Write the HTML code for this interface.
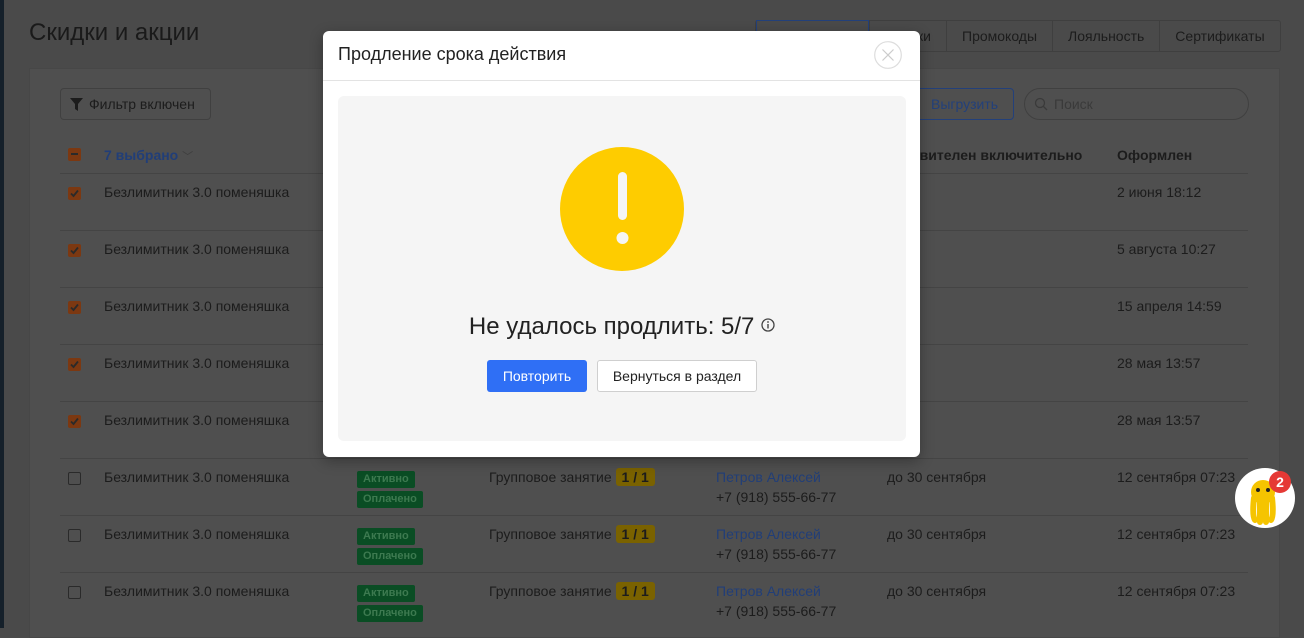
<!DOCTYPE html>
<html><head><meta charset="utf-8"><style>
*{box-sizing:border-box;margin:0;padding:0}
body{width:1304px;height:628px;overflow:hidden;background:#4a4a4a;font-family:"Liberation Sans",Arial,sans-serif;color:#1c1c1c;position:relative;font-size:14px}
.abs{position:absolute}
.strip{left:0;top:0;width:4px;height:628px;background:#15202a}
h1{position:absolute;left:29px;top:19px;font-size:24px;font-weight:normal;color:#1a1a1a}
.tabs{position:absolute;left:755px;top:20px;height:32px;display:flex;border:1px solid #3f3f3f;border-radius:3px}
.tabs div{padding:0 15px;line-height:30px;border-left:1px solid #3f3f3f;font-size:14px;color:#1c1c1c}
.card{left:29px;top:68px;width:1251px;height:570px;background:#4f4f4f;border:1px solid #474747}
.btn{position:absolute;border:1px solid #404040;border-radius:4px;height:32px;line-height:30px;font-size:14px}
.row{position:absolute;left:60px;width:1188px;height:57px;border-top:1px solid #444}
.cb{position:absolute;left:8px;top:13px;width:13px;height:13px;border-radius:2px;background:#7c3811}
.cbe{background:none;border:1px solid #2a2a2a}
.cell{position:absolute;top:10px;font-size:14px}
.tag{display:block;background:#0a4d24;color:#3d7a50;font-size:11px;font-weight:bold;padding:0 6px;border-radius:2px;height:17px;line-height:17px;margin-bottom:3px;width:max-content}
.y{background:#7a6200;color:#1c1c1c;font-weight:bold;padding:1px 6px;border-radius:3px}
.modal{left:323px;top:31px;width:597px;height:426px;background:#fff;border-radius:6px;box-shadow:0 4px 14px rgba(0,0,0,.3)}
</style></head><body>
<div class="abs strip"></div>
<h1>Скидки и акции</h1>
<div class="tabs"><div style="width:113px;border:1px solid #23407a;margin:-1px 0"></div><div style="width:77px;text-align:right">ки</div><div>Промокоды</div><div>Лояльность</div><div>Сертификаты</div></div>
<div class="abs card"></div>
<div class="btn" style="left:60px;top:88px;width:151px;padding-left:28px;color:#1c1c1c"><svg class="abs" style="left:9px;top:9px" width="13" height="13" viewBox="0 0 13 13"><path d="M0 0H13L8 6V13L5 11V6Z" fill="#1c1c1c"/></svg>Фильтр включен</div>
<div class="btn" style="left:905px;top:88px;width:109px;border-color:#23407a;color:#23407a;padding-left:25px">Выгрузить</div>
<div class="btn" style="left:1024px;top:88px;width:225px;border-radius:16px;color:#3a3a3a;padding-left:29px"><svg class="abs" style="left:9px;top:8px" width="14" height="14" viewBox="0 0 14 14"><circle cx="6" cy="6" r="4.5" stroke="#3a3a3a" fill="none" stroke-width="1.3"/><path d="M9.5 9.5L13 13" stroke="#3a3a3a" stroke-width="1.3"/></svg>Поиск</div>
<div class="abs" style="left:68px;top:148px;width:13px;height:13px;background:#7c3811;border-radius:2px"><div style="position:absolute;left:3px;top:5px;width:7px;height:2px;background:#2a2a2a"></div></div>
<div class="abs" style="left:104px;top:147px;font-weight:bold;color:#213e78;font-size:14px">7 выбрано <span style="color:#3e3e3e;font-weight:normal;font-size:11px">﹀</span></div>
<div class="abs" style="left:905px;top:147px;font-weight:bold">ствителен включительно</div>
<div class="abs" style="left:1117px;top:147px;font-weight:bold">Оформлен</div>

<div class="row" style="top:173px"><div class="cb"><svg width="13" height="13"><path d="M3 6.5L5.5 9L10 3.5" stroke="#2a2a2a" stroke-width="1.8" fill="none"/></svg></div><div class="cell" style="left:44px">Безлимитник 3.0 поменяшка</div><div class="cell" style="left:1057px">2 июня 18:12</div></div>
<div class="row" style="top:230px"><div class="cb"><svg width="13" height="13"><path d="M3 6.5L5.5 9L10 3.5" stroke="#2a2a2a" stroke-width="1.8" fill="none"/></svg></div><div class="cell" style="left:44px">Безлимитник 3.0 поменяшка</div><div class="cell" style="left:1057px">5 августа 10:27</div></div>
<div class="row" style="top:287px"><div class="cb"><svg width="13" height="13"><path d="M3 6.5L5.5 9L10 3.5" stroke="#2a2a2a" stroke-width="1.8" fill="none"/></svg></div><div class="cell" style="left:44px">Безлимитник 3.0 поменяшка</div><div class="cell" style="left:1057px">15 апреля 14:59</div></div>
<div class="row" style="top:344px"><div class="cb"><svg width="13" height="13"><path d="M3 6.5L5.5 9L10 3.5" stroke="#2a2a2a" stroke-width="1.8" fill="none"/></svg></div><div class="cell" style="left:44px">Безлимитник 3.0 поменяшка</div><div class="cell" style="left:1057px">28 мая 13:57</div></div>
<div class="row" style="top:401px"><div class="cb"><svg width="13" height="13"><path d="M3 6.5L5.5 9L10 3.5" stroke="#2a2a2a" stroke-width="1.8" fill="none"/></svg></div><div class="cell" style="left:44px">Безлимитник 3.0 поменяшка</div><div class="cell" style="left:1057px">28 мая 13:57</div></div>
<div class="row" style="top:458px"><div class="cb cbe"></div><div class="cell" style="left:44px">Безлимитник 3.0 поменяшка</div><div class="cell" style="left:297px;top:12px"><span class="tag">Активно</span><span class="tag">Оплачено</span></div><div class="cell" style="left:429px">Групповое занятие <span class="y">1 / 1</span></div><div class="cell" style="left:656px;line-height:20px;top:8px"><span style="color:#213e78">Петров Алексей</span><br>+7 (918) 555-66-77</div><div class="cell" style="left:827px">до 30 сентября</div><div class="cell" style="left:1057px">12 сентября 07:23</div></div>
<div class="row" style="top:515px"><div class="cb cbe"></div><div class="cell" style="left:44px">Безлимитник 3.0 поменяшка</div><div class="cell" style="left:297px;top:12px"><span class="tag">Активно</span><span class="tag">Оплачено</span></div><div class="cell" style="left:429px">Групповое занятие <span class="y">1 / 1</span></div><div class="cell" style="left:656px;line-height:20px;top:8px"><span style="color:#213e78">Петров Алексей</span><br>+7 (918) 555-66-77</div><div class="cell" style="left:827px">до 30 сентября</div><div class="cell" style="left:1057px">12 сентября 07:23</div></div>
<div class="row" style="top:572px"><div class="cb cbe"></div><div class="cell" style="left:44px">Безлимитник 3.0 поменяшка</div><div class="cell" style="left:297px;top:12px"><span class="tag">Активно</span><span class="tag">Оплачено</span></div><div class="cell" style="left:429px">Групповое занятие <span class="y">1 / 1</span></div><div class="cell" style="left:656px;line-height:20px;top:8px"><span style="color:#213e78">Петров Алексей</span><br>+7 (918) 555-66-77</div><div class="cell" style="left:827px">до 30 сентября</div><div class="cell" style="left:1057px">12 сентября 07:23</div></div>

<div class="abs" style="left:1235px;top:468px;width:60px;height:60px;border-radius:50%;background:#fff"><svg width="60" height="60" viewBox="0 0 60 60"><circle cx="28" cy="24" r="12" fill="#f5c400"/><path d="M19 30Q17 48 20 52M25 34V54M31 34V54M37 30Q39 48 36 52" stroke="#f5c400" stroke-width="6" stroke-linecap="round" fill="none"/><circle cx="23" cy="22" r="2" fill="#222"/><circle cx="33" cy="22" r="2" fill="#222"/></svg><div style="position:absolute;left:34px;top:3px;width:22px;height:22px;border-radius:50%;background:#e53935;color:#fff;font-weight:bold;font-size:14px;text-align:center;line-height:22px">2</div></div>

<div class="abs modal">
<div class="abs" style="left:15px;top:13px;font-size:18px;color:#222">Продление срока действия</div>
<svg class="abs" style="left:551px;top:10px" width="28" height="28" viewBox="0 0 28 28"><circle cx="14" cy="14" r="13.3" fill="none" stroke="#ddd" stroke-width="1.2"/><path d="M8.5 8.5L19.5 19.5M19.5 8.5L8.5 19.5" stroke="#ccc" stroke-width="1.2"/></svg>
<div class="abs" style="left:0;top:49px;width:597px;height:1px;background:#e3e3e3"></div>
<div class="abs" style="left:15px;top:65px;width:568px;height:345px;background:#f5f5f5;border-radius:6px">
<svg class="abs" style="left:221px;top:50px" width="126" height="126" viewBox="0 0 126 126"><circle cx="63" cy="63" r="62" fill="#fecc00"/><rect x="59" y="26" width="9" height="48" rx="4.5" fill="#f5f5f5"/><circle cx="63.5" cy="92" r="6" fill="#f5f5f5"/></svg>
<div class="abs" style="left:0;width:568px;top:217px;text-align:center;font-size:24px;color:#222">Не удалось продлить: 5/7 <svg width="14" height="14" viewBox="0 0 14 14" style="vertical-align:2px"><circle cx="7" cy="7" r="6" fill="none" stroke="#444" stroke-width="1.3"/><rect x="6.3" y="6" width="1.4" height="4.5" fill="#444"/><circle cx="7" cy="4" r=".9" fill="#444"/></svg></div>
<div class="abs" style="left:149px;top:264px;width:100px;height:32px;background:#2f6ff5;border-radius:3px;color:#fff;text-align:center;line-height:32px;font-size:14px">Повторить</div>
<div class="abs" style="left:259px;top:264px;width:160px;height:32px;background:#fff;border:1px solid #cfcfcf;border-radius:3px;color:#222;text-align:center;line-height:30px;font-size:14px">Вернуться в раздел</div>
</div>
</div>
</body></html>
